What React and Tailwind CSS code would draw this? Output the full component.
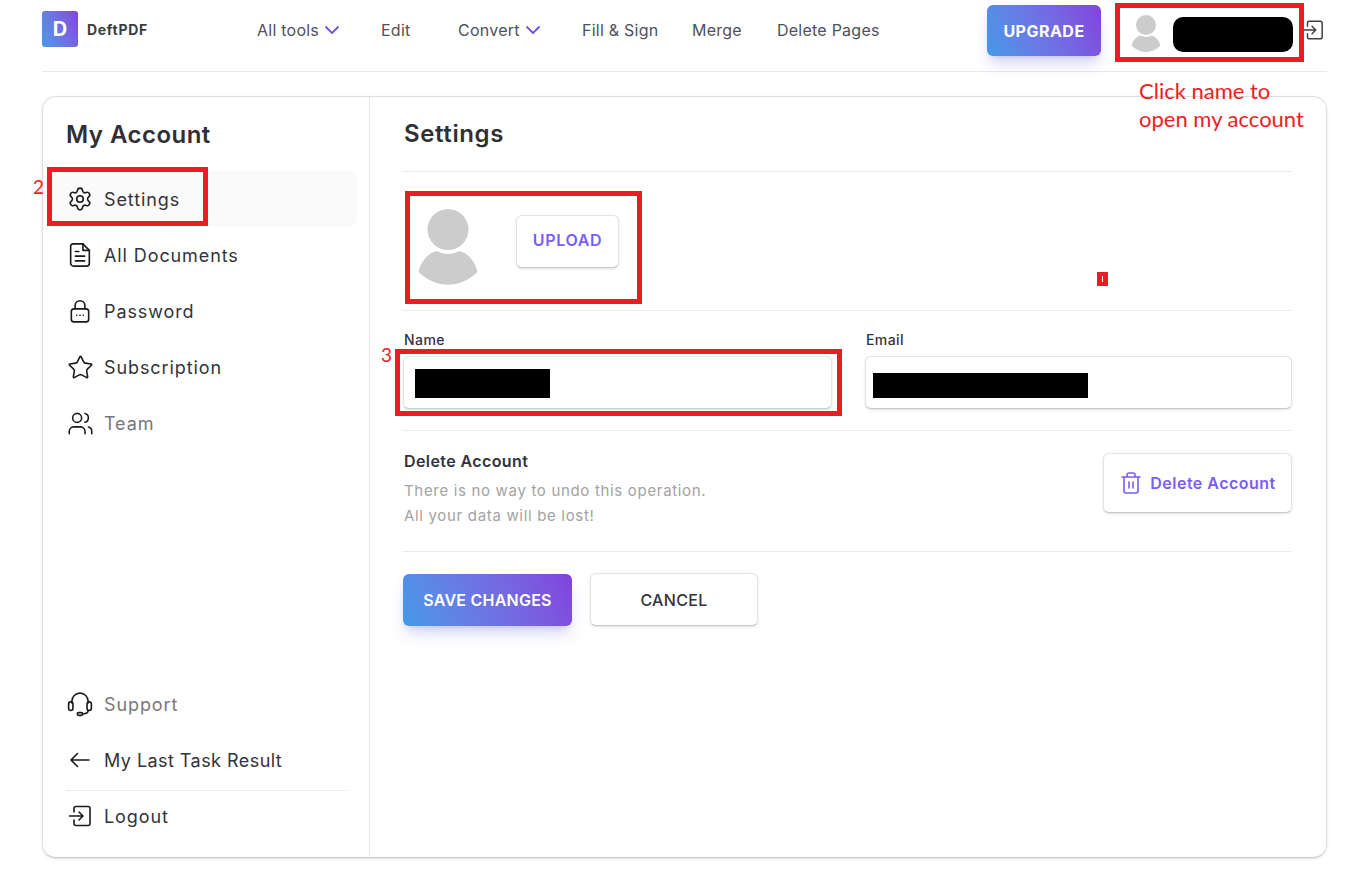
import { ChevronDown, Settings, Star, Trash2, Users } from "lucide-react";

const font = { fontFamily: "Inter, sans-serif" };

function Avatar({ className }) {
  return (
    <svg viewBox="0 0 60 76" className={className}>
      <circle cx="30" cy="20.5" r="20.5" fill="#cccccc" />
      <path d="M0.5 63C3 52 10 44 19 42C25 46 35 46 41 42C50 44 57 52 59.5 63C42 80 18 80 0.5 63Z" fill="#cccccc" />
    </svg>
  );
}

function DocIcon() {
  return (
    <svg viewBox="0 0 24 24" className="w-[28px] h-[28px] shrink-0" fill="none" stroke="#1a1a1a" strokeWidth="1.4" strokeLinejoin="round" strokeLinecap="round">
      <path d="M6 2.500h8.500L20 8v11a2.500 2.500 0 0 1-2.500 2.500h-11A2.500 2.500 0 0 1 4 19V4.500A2 2 0 0 1 6 2.500Z" />
      <path d="M14.500 2.500V8H20M8 9h3M8 13h8M8 17h8" />
    </svg>
  );
}

function LockIcon() {
  return (
    <svg viewBox="0 0 24 24" className="w-[26px] h-[26px] shrink-0" fill="none" stroke="#1a1a1a" strokeWidth="1.5" strokeLinecap="round">
      <rect x="4" y="10" width="16" height="12" rx="2.500" />
      <path d="M7.500 10V7a4.500 4.500 0 0 1 9 0v3" />
      <path d="M9 16h.01M12 16h.01M15 16h.01" />
    </svg>
  );
}

function HeadsetIcon() {
  return (
    <svg viewBox="0 0 24 24" className="w-[26px] h-[26px] shrink-0" fill="none" stroke="#1a1a1a" strokeWidth="1.5" strokeLinecap="round">
      <path d="M4.500 11V9.500a7.500 7.500 0 0 1 15 0V11" />
      <rect x="1.500" y="10" width="4" height="8" rx="2" />
      <rect x="18.500" y="10" width="4" height="8" rx="2" />
      <path d="M19.500 18c0 2-2 3-4.500 3.200" />
      <rect x="9.500" y="20" width="5" height="2.500" rx="1.200" />
    </svg>
  );
}

function BackIcon() {
  return (
    <svg viewBox="0 0 24 24" className="w-[24px] h-[24px] shrink-0" fill="none" stroke="#1a1a1a" strokeWidth="1.600" strokeLinecap="round" strokeLinejoin="round">
      <path d="M21 12H3M9.500 5.500 3 12l6.500 6.500" />
    </svg>
  );
}

function ExitIcon({ className, stroke = "#1a1a1a" }) {
  return (
    <svg viewBox="0 0 24 24" className={`shrink-0 ${className}`} fill="none" stroke={stroke} strokeWidth="1.600" strokeLinecap="round" strokeLinejoin="round">
      <path d="M6 8V4.500A2 2 0 0 1 8 2.500h12a2 2 0 0 1 2 2v15a2 2 0 0 1-2 2H8a2 2 0 0 1-2-2V16" />
      <path d="M1.500 12H15M11 8l4 4-4 4" />
    </svg>
  );
}

function Redacted({ className }) {
  return <div className={`bg-black ${className}`} />;
}

function Divider({ className = "" }) {
  return <div className={`h-px bg-[#e9e9f0] ${className}`} />;
}

function SideItem({ icon, label, active, muted, tight }) {
  return (
    <div className={`flex items-center h-14 pl-[20px] gap-[12px] rounded-lg ${active ? "bg-[#fafafa]" : ""}`}>
      <span className="w-[24px] flex justify-center text-[#1a1a1a]">{icon}</span>
      <span className={`text-[18px] ${tight ? "tracking-[0.025em]" : "tracking-[0.05em]"} ${muted ? "text-[#77777f]" : "text-[#33333b]"}`}>{label}</span>
    </div>
  );
}

function Header() {
  return (
    <header className="h-[72px] border-b border-[#e8e8e8] flex items-start">
      <div className="flex items-center w-[215px] pt-[11px]">
        <div className="w-[36px] h-[36px] rounded-[3px] bg-linear-65 from-[#4299e9] to-[#8242dc] flex items-center justify-center text-white font-bold text-[20px]">D</div>
        <span className="ml-[9px] text-[14px] font-bold text-[#3b3b3f] tracking-[0.05em]">DeftPDF</span>
      </div>
      <nav className="flex items-center h-[60px] text-[16px] tracking-[0.015em] text-[#50505c]">
        <div className="w-[124px] flex items-center gap-[1px]">All tools <ChevronDown size={24} strokeWidth={1.8} className="text-[#7353e0]" /></div>
        <div className="w-[77px]">Edit</div>
        <div className="w-[124px] flex items-center gap-[1px]">Convert <ChevronDown size={24} strokeWidth={1.8} className="text-[#7353e0]" /></div>
        <div className="w-[110px]">Fill &amp; Sign</div>
        <div className="w-[85px]">Merge</div>
        <div className="w-[210px]">Delete Pages</div>
      </nav>
      <div className="mt-[5px] w-[114px] h-[51px] rounded-md bg-linear-65 from-[#4299e9] to-[#8242dc] shadow-lg shadow-[#5b5bd0]/25 flex items-center justify-center text-white font-bold text-[16px] tracking-[0.03em]">UPGRADE</div>
      <div className="flex items-start h-[62px] ml-[30px]">
        <Avatar className="mt-[15px] w-[30px] h-[37px]" />
        <Redacted className="mt-[17px] ml-[12px] w-[120px] h-[35px] rounded-[10px]" />
        <ExitIcon stroke="#3f3f3f" className="mt-[18px] ml-[9px] w-[22px] h-[24px]" />
      </div>
    </header>
  );
}

function Sidebar() {
  return (
    <aside className="w-[327px] shrink-0 border-r border-[#e8e8e8] flex flex-col pl-[5px] pr-[12px]">
      <h2 className="pl-[18px] pt-[22px] h-[74px] text-[24px] leading-[32px] font-semibold text-[#2f2f35] tracking-[0.02em]">My Account</h2>
      <SideItem active icon={<Settings size={26} strokeWidth={1.5} className="shrink-0" />} label="Settings" />
      <SideItem icon={<DocIcon />} label="All Documents" />
      <SideItem icon={<LockIcon />} label="Password" />
      <SideItem icon={<Star size={27} strokeWidth={1.4} className="shrink-0" />} label="Subscription" />
      <SideItem muted icon={<Users size={27} strokeWidth={1.4} className="shrink-0" />} label="Team" />
      <div className="mt-auto pb-[13px]">
        <SideItem muted icon={<HeadsetIcon />} label="Support" />
        <SideItem tight icon={<BackIcon />} label="My Last Task Result" />
        <Divider className="ml-[18px] mr-[10px] mt-[2px] mb-[-3px]" />
        <SideItem icon={<ExitIcon className="w-[24px] h-[24px]" />} label="Logout" />
      </div>
    </aside>
  );
}

function Field({ label, children }) {
  return (
    <div>
      <div className="pl-px text-[14px] leading-[18px] font-medium text-[#33333b] tracking-[0.03em]">{label}</div>
      <div className="h-[53px] mt-[7px] bg-white rounded-md border border-[#e4e4e4] border-b-[#c9c9cf] shadow-sm flex items-center">{children}</div>
    </div>
  );
}

function Main() {
  return (
    <main className="flex-1 pl-[33px] pr-[34px]">
      <h1 className="pl-px pt-[21px] h-[74px] text-[24px] leading-[32px] font-semibold text-[#2f2f35] tracking-[0.025em]">Settings</h1>
      <Divider />
      <div className="h-[138px] flex items-center pl-[15px]">
        <Avatar className="mt-[12px] w-[60px] h-[76px]" />
        <button className="ml-[38px] w-[103px] h-[53px] pb-[2px] rounded-md bg-white border border-[#e4e4e4] border-b-[#c9c9cf] shadow-sm text-[#7c5cfc] font-semibold text-[16px] tracking-[0.04em]">UPLOAD</button>
      </div>
      <Divider />
      <div className="grid grid-cols-[429px_1fr] gap-[33px] pt-[20px] pb-[21px]">
        <Field label="Name"><Redacted className="ml-[11px] w-[135px] h-[29px] mt-[2px]" /></Field>
        <Field label="Email"><Redacted className="ml-[7px] w-[215px] h-[25px] mt-[6px]" /></Field>
      </div>
      <Divider />
      <div className="h-[120px] flex justify-between">
        <div className="pt-[19px] pl-px">
          <div className="text-[16px] leading-[22px] font-semibold text-[#33333b] tracking-[0.025em]">Delete Account</div>
          <p className="mt-[6px] text-[15px] leading-[25px] text-[#a3a3a3] tracking-[0.045em]">There is no way to undo this operation.<br />All your data will be lost!</p>
        </div>
        <button className="mt-[22px] w-[189px] h-[60px] pb-[1px] rounded-md bg-white border border-[#e4e4e4] border-b-[#c9c9cf] shadow-sm flex items-center justify-center gap-[7px] text-[#7c5cfc] font-semibold text-[16px] tracking-[0.03em]">
          <Trash2 size={24} strokeWidth={1.600} />
          Delete Account
        </button>
      </div>
      <Divider />
      <div className="flex gap-[18px] pt-[22px]">
        <button className="w-[169px] h-[52px] rounded-md bg-linear-65 from-[#4299e9] to-[#8242dc] shadow-lg shadow-[#5b5bd0]/25 text-white font-semibold text-[16px] tracking-[0.015em]">SAVE CHANGES</button>
        <button className="w-[168px] h-[53px] -mt-px rounded-md bg-white border border-[#e4e4e4] border-b-[#c9c9cf] shadow-sm text-[#33333b] font-medium text-[16px] tracking-[0.02em]">CANCEL</button>
      </div>
    </main>
  );
}

// the red markup drawn on top of the screenshot
function Annotations() {
  const note = { fontFamily: "Lato, sans-serif" };
  return (
    <>
      <div className="absolute left-[1115px] top-[3px] w-[189px] h-[59px] border-[5px] border-[#ed1c24]" />
      <div className="absolute left-[47px] top-[167px] w-[161px] h-[59px] border-[5px] border-[#ed1c24]" />
      <div className="absolute left-[405px] top-[191px] w-[237px] h-[113px] border-[5px] border-[#ed1c24]" />
      <div className="absolute left-[395px] top-[349px] w-[447px] h-[67px] border-[5px] border-[#ed1c24]" />
      <div className="absolute left-[1097px] top-[272px] w-[11px] h-[14px] bg-[#ed1c24] flex items-center justify-center">
        <div className="w-px h-[6px] bg-white" />
      </div>
      <div style={note} className="absolute left-[1139px] top-[77px] text-[#f01c24] text-[22px] leading-[28px]">Click name to<br />open my account</div>
      <div style={note} className="absolute left-[33px] top-[176px] text-[#f01c24] text-[19px] leading-[22px]">2</div>
      <div style={note} className="absolute left-[381px] top-[344px] text-[#f01c24] text-[19px] leading-[22px]">3</div>
    </>
  );
}

export default function App() {
  return (
    <div style={font} className="relative min-h-[875px] bg-white pl-[42px] pr-[24px]">
      <Header />
      <div className="mt-[24px] h-[762px] rounded-[14px] border border-[#dedede] border-b-[#c9c9cf] shadow-sm flex">
        <Sidebar />
        <Main />
      </div>
      <Annotations />
    </div>
  );
}
